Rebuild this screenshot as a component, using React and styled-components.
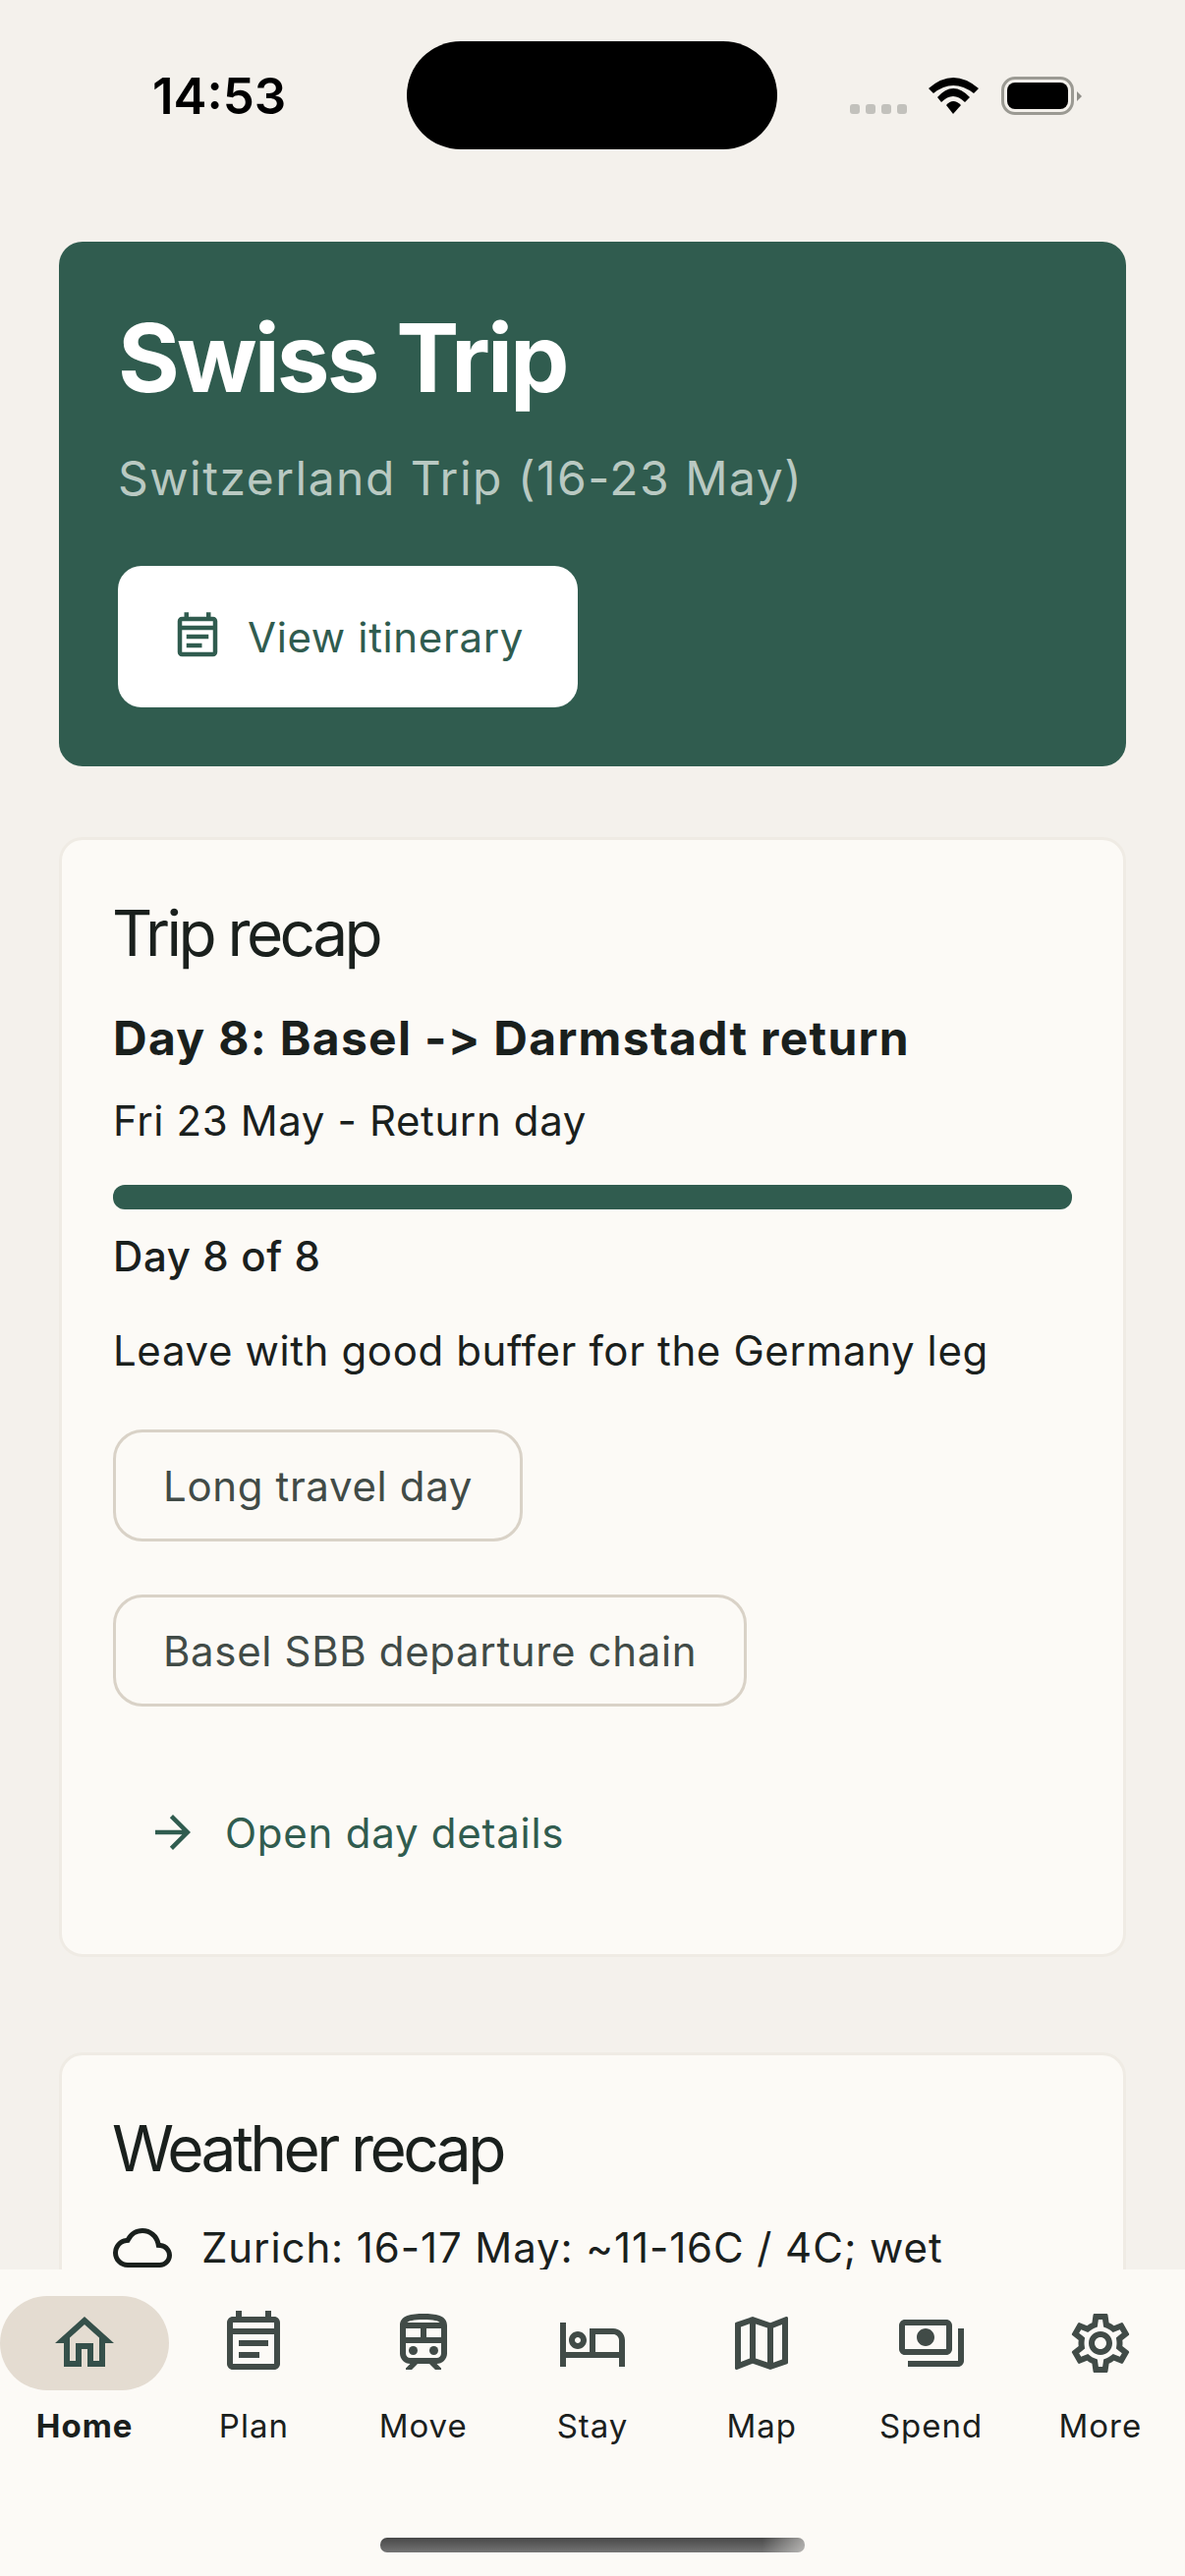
import React from 'react'
import styled, { createGlobalStyle } from 'styled-components'
import {
    MdOutlineHome,
    MdOutlineEventNote,
    MdOutlineTrain,
    MdOutlineHotel,
    MdOutlineMap,
    MdOutlinePayments,
    MdOutlineSettings,
    MdOutlineCloud,
    MdArrowForward,
} from 'react-icons/md'

const GlobalStyle = createGlobalStyle`
    html, body {
        margin: 0;
        padding: 0;
        background: #f4f1ec;
    }
    * {
        box-sizing: border-box;
    }
`

const Screen = styled.div`
    position: relative;
    width: 1206px;
    height: 2622px;
    overflow: hidden;
    background: #f4f1ec;
    color: #1a201d;
    font-family: Inter, "Liberation Sans", sans-serif;
`

const StatusBar = styled.div`
    height: 246px;
    display: flex;
    align-items: flex-start;
    padding-top: 42px;
`

const Time = styled.div`
    width: 414px;
    padding: 25px 0 0 155px;
    font-size: 51px;
    line-height: 62px;
    font-weight: 600;
    color: #000;
`

const Island = styled.div`
    width: 377px;
    height: 110px;
    border-radius: 55px;
    background: #000;
`

const StatusIcons = styled.div`
    margin: 36px 0 0 74px;
    display: flex;
    align-items: flex-end;
    height: 39px;
`

const Dots = styled.div`
    display: flex;
    gap: 6px;
    margin: 0 22px 1px 0;
`

const Dot = styled.span`
    width: 10px;
    height: 10px;
    border-radius: 3px;
    background: #c2c1bc;
`

const Battery = styled.div`
    position: relative;
    width: 74px;
    height: 39px;
    margin-left: 22px;
    padding: 3px;
    border: 3px solid #9b9a93;
    border-radius: 14px;

    &::after {
        content: '';
        position: absolute;
        right: -11px;
        top: 12px;
        border-style: solid;
        border-width: 5px 0 5px 5px;
        border-color: transparent transparent transparent #8f8e88;
    }
`

const BatteryFill = styled.div`
    height: 100%;
    border-radius: 8px;
    background: #000;
`

const Content = styled.main`
    padding: 0 60px;
`

const Hero = styled.section`
    height: 534px;
    padding: 60px;
    border-radius: 24px;
    background: #305c4f;
`

const HeroTitle = styled.h1`
    margin: 0;
    font-size: 96px;
    line-height: 116px;
    font-weight: 700;
    letter-spacing: -2.9px;
    color: #fff;
`

const HeroSubtitle = styled.p`
    margin: 38px 0 0;
    font-size: 48px;
    line-height: 54px;
    font-weight: 400;
    letter-spacing: 1.5px;
    color: #b9c9c2;
`

const ItineraryButton = styled.button`
    margin-top: 62px;
    width: 468px;
    height: 144px;
    display: flex;
    align-items: center;
    gap: 24px;
    padding: 0 0 0 54px;
    border: 0;
    border-radius: 24px;
    background: #fff;
    color: #305c4f;
    font-family: inherit;
    font-size: 42px;
    font-weight: 400;
    letter-spacing: 0.65px;
`

const Card = styled.section`
    margin-top: ${({ $top }) => $top}px;
    padding: 52px 52px 74px;
    border: 3px solid #efebe4;
    border-radius: 24px;
    background: #fcfaf6;
`

const CardTitle = styled.h2`
    margin: 0 0 0 -1px;
    font-size: 64px;
    line-height: 86px;
    font-weight: 400;
    letter-spacing: -3.6px;
`

const DayTitle = styled.h3`
    margin: 34px 0 0;
    font-size: 48px;
    line-height: 60px;
    font-weight: 700;
    letter-spacing: 1.3px;
`

const BodyText = styled.p`
    margin: ${({ $top }) => $top}px 0 0;
    font-size: 42px;
    line-height: 54px;
    font-weight: ${({ $medium }) => ($medium ? 500 : 400)};
    letter-spacing: 0.62px;
`

const ProgressTrack = styled.div`
    margin-top: 38px;
    height: 25px;
    border-radius: 12px;
    background: #305c4f;
`

const ChipList = styled.div`
    margin-top: 53px;
    display: flex;
    flex-direction: column;
    align-items: flex-start;
    gap: 54px;
`

const Chip = styled.div`
    height: 114px;
    display: flex;
    align-items: center;
    padding: 0 48px;
    border: 3px solid #d9d2c7;
    border-radius: 30px;
    font-size: 42px;
    letter-spacing: 0.64px;
    color: #414b47;
`

const DetailsLink = styled.a`
    margin: 78px 0 0 34px;
    height: 100px;
    display: flex;
    align-items: center;
    gap: 26px;
    font-size: 42px;
    font-weight: 400;
    letter-spacing: 0.75px;
    color: #305c4f;
`

const WeatherRow = styled.div`
    margin-top: 28px;
    display: flex;
    align-items: center;
    gap: 30px;
    font-size: 42px;
    line-height: 54px;
    letter-spacing: 0.9px;
`

const BottomNav = styled.nav`
    position: absolute;
    left: 0;
    right: 0;
    bottom: 0;
    height: 312px;
    padding-top: 27px;
    background: #fcfaf6;
`

const NavGrid = styled.div`
    display: grid;
    grid-template-columns: repeat(7, 1fr);
`

const NavItem = styled.div`
    display: flex;
    flex-direction: column;
    align-items: center;
    font-size: 33px;
    line-height: 42px;
    letter-spacing: 1px;
    font-weight: ${({ $active }) => ($active ? 700 : 400)};
`

const NavIcon = styled.div`
    width: 172px;
    height: 96px;
    display: flex;
    align-items: center;
    justify-content: center;
    border-radius: 48px;
    margin-bottom: 15px;
    background: ${({ $active }) => ($active ? '#e4dcd1' : 'transparent')};
    color: ${({ $active }) => ($active ? '#35504a' : '#414b47')};
`

const HomeIndicator = styled.div`
    position: absolute;
    left: 387px;
    bottom: 24px;
    width: 432px;
    height: 15px;
    border-radius: 7px;
    background:
        linear-gradient(90deg, rgba(252, 250, 246, 0) 90%, rgba(252, 250, 246, 0.5) 100%),
        linear-gradient(180deg, #484848, #747474);
`

const navItems = [
    { label: 'Home', icon: MdOutlineHome, active: true },
    { label: 'Plan', icon: MdOutlineEventNote },
    { label: 'Move', icon: MdOutlineTrain },
    { label: 'Stay', icon: MdOutlineHotel },
    { label: 'Map', icon: MdOutlineMap },
    { label: 'Spend', icon: MdOutlinePayments },
    { label: 'More', icon: MdOutlineSettings },
]

function WifiIcon() {
    return (
        <svg width="52" height="38" viewBox="0 0 52 38" fill="#000">
            <path d="M0 11Q25 -11 51 11L46 16Q25 0 5 16Z" />
            <path d="M9 20Q25 2 42 20L37 25Q25 13 13 25Z" />
            <path d="M18 28Q25 20 33 28L25 37Z" />
        </svg>
    )
}

function App() {
    return (
        <Screen>
            <GlobalStyle />
            <StatusBar>
                <Time>14:53</Time>
                <Island />
                <StatusIcons>
                    <Dots>
                        <Dot />
                        <Dot />
                        <Dot />
                        <Dot />
                    </Dots>
                    <WifiIcon />
                    <Battery>
                        <BatteryFill />
                    </Battery>
                </StatusIcons>
            </StatusBar>

            <Content>
                <Hero>
                    <HeroTitle>Swiss Trip</HeroTitle>
                    <HeroSubtitle>Switzerland Trip (16-23 May)</HeroSubtitle>
                    <ItineraryButton>
                        <MdOutlineEventNote size={54} />
                        View itinerary
                    </ItineraryButton>
                </Hero>

                <Card $top={72}>
                    <CardTitle>Trip recap</CardTitle>
                    <DayTitle>Day 8: Basel -&gt; Darmstadt return</DayTitle>
                    <BodyText $top={27}>Fri 23 May - Return day</BodyText>
                    <ProgressTrack />
                    <BodyText $top={21} $medium>Day 8 of 8</BodyText>
                    <BodyText $top={42}>Leave with good buffer for the Germany leg</BodyText>
                    <ChipList>
                        <Chip>Long travel day</Chip>
                        <Chip>Basel SBB departure chain</Chip>
                    </ChipList>
                    <DetailsLink>
                        <MdArrowForward size={54} />
                        Open day details
                    </DetailsLink>
                </Card>

                <Card $top={97}>
                    <CardTitle>Weather recap</CardTitle>
                    <WeatherRow>
                        <MdOutlineCloud size={60} />
                        Zurich: 16-17 May: ~11-16C / 4C; wet
                    </WeatherRow>
                </Card>
            </Content>

            <BottomNav>
                <NavGrid>
                    {navItems.map(({ label, icon: Icon, active }) => (
                        <NavItem key={label} $active={active}>
                            <NavIcon $active={active}>
                                <Icon size={72} />
                            </NavIcon>
                            {label}
                        </NavItem>
                    ))}
                </NavGrid>
                <HomeIndicator />
            </BottomNav>
        </Screen>
    )
}

export default App
